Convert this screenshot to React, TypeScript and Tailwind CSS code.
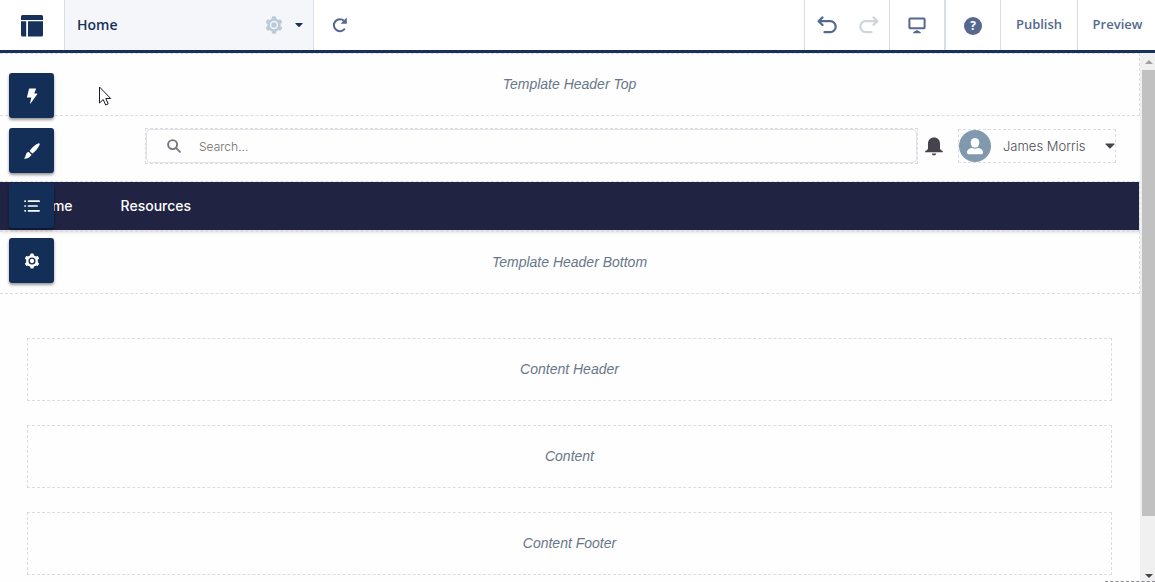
import type { ReactNode } from "react";

const SLOT = "border border-dashed border-[#dcdde3]";

function Gear({ size, hole }: { size: number; hole: string }) {
  return (
    <svg width={size} height={size} viewBox="0 0 20 20" aria-hidden="true">
      <g fill="currentColor">
        <circle cx="10" cy="10" r="7.4" />
        <rect x="7.6" y="0.4" width="4.8" height="19.2" rx="1.4" />
        <rect x="7.6" y="0.4" width="4.8" height="19.2" rx="1.4" transform="rotate(60 10 10)" />
        <rect x="7.6" y="0.4" width="4.8" height="19.2" rx="1.4" transform="rotate(120 10 10)" />
      </g>
      <circle cx="10" cy="10" r="4.6" fill={hole} />
      <circle cx="10" cy="10" r="3" fill="currentColor" />
    </svg>
  );
}

function ToolGear() {
  return (
    <svg width="16" height="16" viewBox="0 0 20 20" aria-hidden="true">
      <g fill="currentColor">
        <circle cx="10" cy="10" r="7.4" />
        <rect x="7.8" y="0.6" width="4.4" height="18.8" rx="1.4" />
        <rect x="7.8" y="0.6" width="4.4" height="18.8" rx="1.4" transform="rotate(60 10 10)" />
        <rect x="7.8" y="0.6" width="4.4" height="18.8" rx="1.4" transform="rotate(120 10 10)" />
      </g>
      <circle cx="10" cy="10" r="4.4" fill="#142f57" />
      <circle cx="10" cy="10" r="2.7" fill="currentColor" />
    </svg>
  );
}

function Caret({ className }: { className: string }) {
  return (
    <svg width="10" height="6" viewBox="0 0 10 6" className={className} aria-hidden="true">
      <path d="M0.8 0.5h8.4q.7.2.2.8L5.6 5.2q-.6.5-1.2 0L.6 1.3Q.1.7.8.5z" fill="currentColor" />
    </svg>
  );
}

function UndoIcon() {
  return (
    <svg width="20" height="18" viewBox="0 0 20 18" fill="none" stroke="currentColor" strokeWidth="2.2" strokeLinecap="round" strokeLinejoin="round" aria-hidden="true">
      <path d="M5.5 1.400L1.600 5.200l3.900 3.800M2 5.200h11.200a5.500 5.500 0 0 1 0 11H7.500" />
    </svg>
  );
}

function ToolButton({ label, children }: { label: string; children: ReactNode }) {
  return (
    <button
      type="button"
      aria-label={label}
      className="flex h-[45px] w-[45px] items-center justify-center rounded-[3px] bg-[#142f57] text-white shadow-[0_2px_3px_rgba(0,0,0,0.4)]"
    >
      {children}
    </button>
  );
}

function Slot({ label, className }: { label: string; className: string }) {
  return (
    <div className={`flex h-[63px] items-center justify-center pb-px text-sm italic text-[#687789] ${className}`}>
      {label}
    </div>
  );
}

function TopBar() {
  return (
    <header className="flex h-[53px] shrink-0 items-stretch border-b-[3px] border-[#16325c] bg-white font-['Open_Sans','Liberation_Sans',sans-serif] text-[#54698d]">
      <button type="button" aria-label="Builder menu" className="flex w-16 items-center justify-center pt-0.5 text-[#16325c]">
        <svg width="22" height="22" viewBox="0 0 22 22" fill="currentColor" aria-hidden="true">
          <path d="M1.5 0h19Q22 0 22 1.5V5H0V1.5Q0 0 1.5 0zM0 6.2h5.2V21.5H1.5Q0 21.5 0 20zM7 6.2h15V20q0 1.5-1.5 1.5H7z" />
        </svg>
      </button>
      <div className="flex w-[250px] items-center border-x border-[#d8dde6] bg-[#f4f6f9] px-3 text-[#16325c]">
        <span className="grow text-sm font-semibold">Home</span>
        <button type="button" aria-label="Page settings" className="mr-2.5 text-[#bccbd8]">
          <Gear size={18} hole="#f4f6f9" />
        </button>
        <button type="button" aria-label="Choose page" className="-mr-1 flex w-3 justify-center">
          <Caret className="w-2" />
        </button>
      </div>
      <button type="button" aria-label="Refresh" className="flex w-[51px] items-center justify-center">
        <svg width="16" height="16" viewBox="0 0 16 16" aria-hidden="true">
          <path d="M12.4 12.2A6 6 0 1 1 12.2 4" fill="none" stroke="currentColor" strokeWidth="2" strokeLinecap="round" />
          <path d="M14.8 0.600v6.200H8.600l2-2L12.8 2.600z" fill="currentColor" />
        </svg>
      </button>
      <div className="ml-auto flex">
        <div className="flex w-[85px] items-center justify-between border-l border-[#d8dde6] pr-2.5 pl-3">
          <button type="button" aria-label="Undo">
            <UndoIcon />
          </button>
          <button type="button" aria-label="Redo" disabled className="-scale-x-100 text-[#d0d5db]">
            <UndoIcon />
          </button>
        </div>
        <button type="button" aria-label="Desktop view" className="flex w-[55px] items-center justify-center border-l border-[#d8dde6]">
          <svg width="18" height="17" viewBox="0 0 18 17" aria-hidden="true">
            <rect x="1.4" y="1.4" width="15.200" height="9.8" rx="0.8" fill="none" stroke="currentColor" strokeWidth="2" />
            <path d="M9 12.9l3 1.8q.9.3.9 1.6H5.1q0-1.3.9-1.6z" fill="currentColor" />
          </svg>
        </button>
        <button type="button" aria-label="Help" className="flex w-14 items-center justify-center border-l-2 border-[#d8dde6] pt-0.5">
          <span className="flex h-[18px] w-[18px] items-center justify-center rounded-full bg-[#54698d] text-xs font-bold text-white">?</span>
        </button>
        <button type="button" className="w-[77px] border-l border-[#d8dde6] text-[13px] font-semibold">Publish</button>
        <button type="button" className="w-[78px] border-l border-[#d8dde6] pl-0.5 text-[13px] font-semibold">Preview</button>
      </div>
    </header>
  );
}

function SiteHeader() {
  return (
    <div className="flex h-[65px] items-start pt-3 pr-6 pl-[145px] font-['Inter','Liberation_Sans',sans-serif]">
      <div className={`h-9 grow ${SLOT}`}>
        <label className="flex h-full items-center rounded border border-[#e2e3e7] pl-5">
          <svg width="14" height="14" viewBox="0 0 14 14" fill="none" stroke="#77747f" strokeWidth="1.9" strokeLinecap="round" aria-hidden="true">
            <circle cx="5.6" cy="5.6" r="4.5" />
            <path d="M9.2 9.2l3.7 3.7" />
          </svg>
          <input
            type="search"
            aria-label="Search"
            placeholder="Search..."
            className="ml-[18px] h-full min-w-0 grow bg-transparent text-xs font-light outline-none placeholder:text-[#706e6b]"
          />
        </label>
      </div>
      <button type="button" aria-label="Notifications" className="flex h-9 w-10 items-center justify-center pr-2 text-[#46434d]">
        <svg width="18" height="19" viewBox="0 0 18 19" fill="currentColor" aria-hidden="true">
          <path d="M9 0.4c3.8 0 6 2.6 6 6.1v4.3c0 1.4.5 2 1.8 2.8.7.4 1.2.8 1.2 1.7H0c0-.9.5-1.3 1.2-1.7C2.5 12.800 3 12.200 3 10.800V6.500C3 3 5.200.4 9 .4zM6.700 16.600h4.600q-.6 2-2.300 2t-2.300-2z" />
        </svg>
      </button>
      <button type="button" className={`mt-px flex h-[34px] w-[158px] items-center text-[13px] font-light text-[#4e4c55] ${SLOT}`}>
        <svg width="32" height="32" viewBox="0 0 32 32" className="shrink-0" aria-hidden="true">
          <circle cx="16" cy="16" r="16" fill="#8199af" />
          <ellipse cx="16" cy="12.800" rx="4.300" ry="4.900" fill="#fff" />
          <path d="M8 22.600c0-3.200 2.500-3.800 5-4.800 1.800 1.300 4.200 1.300 6 0 2.500 1 5 1.600 5 4.800q0 1.600-1.500 1.600h-13Q8 24.200 8 22.600z" fill="#fff" />
        </svg>
        <span className="ml-3 grow pt-0.5 text-left">James Morris</span>
        <Caret className="text-[#46434d]" />
      </button>
    </div>
  );
}

function Tools() {
  return (
    <aside aria-label="Builder tools" className="absolute top-5 left-[9px] flex flex-col gap-2.5">
      <ToolButton label="Components">
        <svg width="12" height="16" viewBox="0 0 12 16" fill="currentColor" aria-hidden="true">
          <path d="M3.600.5h6q.6 0 .4.600L8.200 5.600h2.600q.8 0 .4.700L4.800 15.200q-.8.700-.700-.2l1.200-5.400H1.600q-.8 0-.6-.7L3 1q.1-.5.600-.5z" />
        </svg>
      </ToolButton>
      <ToolButton label="Theme">
        <svg width="16" height="16" viewBox="0 0 16 16" fill="currentColor" aria-hidden="true">
          <path d="M14.800.3q1.300.1.800 1.500C14.200 5 11.500 8.300 8.900 10.200q-.5.400-.9 0L6 8.200q-.4-.400 0-.900C8.300 4.300 11.600 1.200 14.800.3zM4.900 9.100l2.300 2.300q.4.400 0 .9c-1.500 2.600-4.300 3.300-6.600 3.500-.5 0-.6-.5-.2-.8 1.200-1 .9-2.400 1.700-4.100.5-1.200 1.900-2.300 2.800-1.800z" />
        </svg>
      </ToolButton>
      <ToolButton label="Page structure">
        <svg width="16" height="12" viewBox="0 0 16 12" stroke="currentColor" strokeWidth="1.700" strokeLinecap="round" aria-hidden="true">
          <path d="M4.500 1.200h10.600M4.500 6h8.600M4.500 10.800h10.600M1 1.200h.3M1 6h.3M1 10.800h.3" />
        </svg>
      </ToolButton>
      <ToolButton label="Settings">
        <ToolGear />
      </ToolButton>
    </aside>
  );
}

function ScrollTrack() {
  return (
    <div aria-hidden="true" className="flex w-[15px] shrink-0 flex-col items-center bg-[#f0f0f0]">
      <div className="flex h-[17px] items-center pl-0.5 text-[#a39ca2]">
        <svg width="8" height="4" viewBox="0 0 8 4"><path d="M4 0l4 4H0z" fill="currentColor" /></svg>
      </div>
      <div className="ml-0.5 w-[13px] grow bg-[#c1c1c1]" />
      <div className="flex h-[66px] items-end pb-1 pl-0.5 text-[#46434d]">
        <svg width="8" height="4" viewBox="0 0 8 4"><path d="M0 0h8L4 4z" fill="currentColor" /></svg>
      </div>
    </div>
  );
}

export default function App() {
  return (
    <div className="relative flex h-screen flex-col overflow-hidden bg-[#fefefe] font-['Liberation_Sans',Arial,sans-serif]">
      <TopBar />
      <div className="relative flex min-h-0 grow">
        <main className="min-w-0 grow overflow-hidden">
          <Slot label="Template Header Top" className="border-y border-r border-dashed border-[#dcdde3]" />
          <SiteHeader />
          <nav
            aria-label="Site"
            className="flex h-[50px] items-center gap-12 border-y border-r border-dashed border-[#dcdde3] bg-[#202342] bg-clip-padding pl-[33px] font-['Inter','Liberation_Sans',sans-serif] text-sm font-medium text-white shadow-[0_2px_3px_rgba(0,0,0,0.1)]"
          >
            <a href="#home">Home</a>
            <a href="#resources">Resources</a>
          </nav>
          <Slot label="Template Header Bottom" className="border-y border-r border-dashed border-[#dcdde3]" />
          <div className="flex flex-col gap-6 pt-11 pr-7 pl-[27px]">
            <Slot label="Content Header" className={SLOT} />
            <Slot label="Content" className={SLOT} />
            <Slot label="Content Footer" className={SLOT} />
          </div>
        </main>
        <ScrollTrack />
        <Tools />
        <svg width="14" height="21" viewBox="0 0 14 21" className="pointer-events-none absolute top-[33px] left-[98px]" aria-hidden="true">
          <path d="M1.500 1v16l3.700-3.500 2.500 5.500 2.500-1.100L7.800 12.500h4.900z" fill="#fff" stroke="#1c1c28" strokeWidth="1" />
        </svg>
        <div className="absolute right-0 bottom-0 w-[50px] border-b border-dashed border-[#8b8794]" />
      </div>
    </div>
  );
}
